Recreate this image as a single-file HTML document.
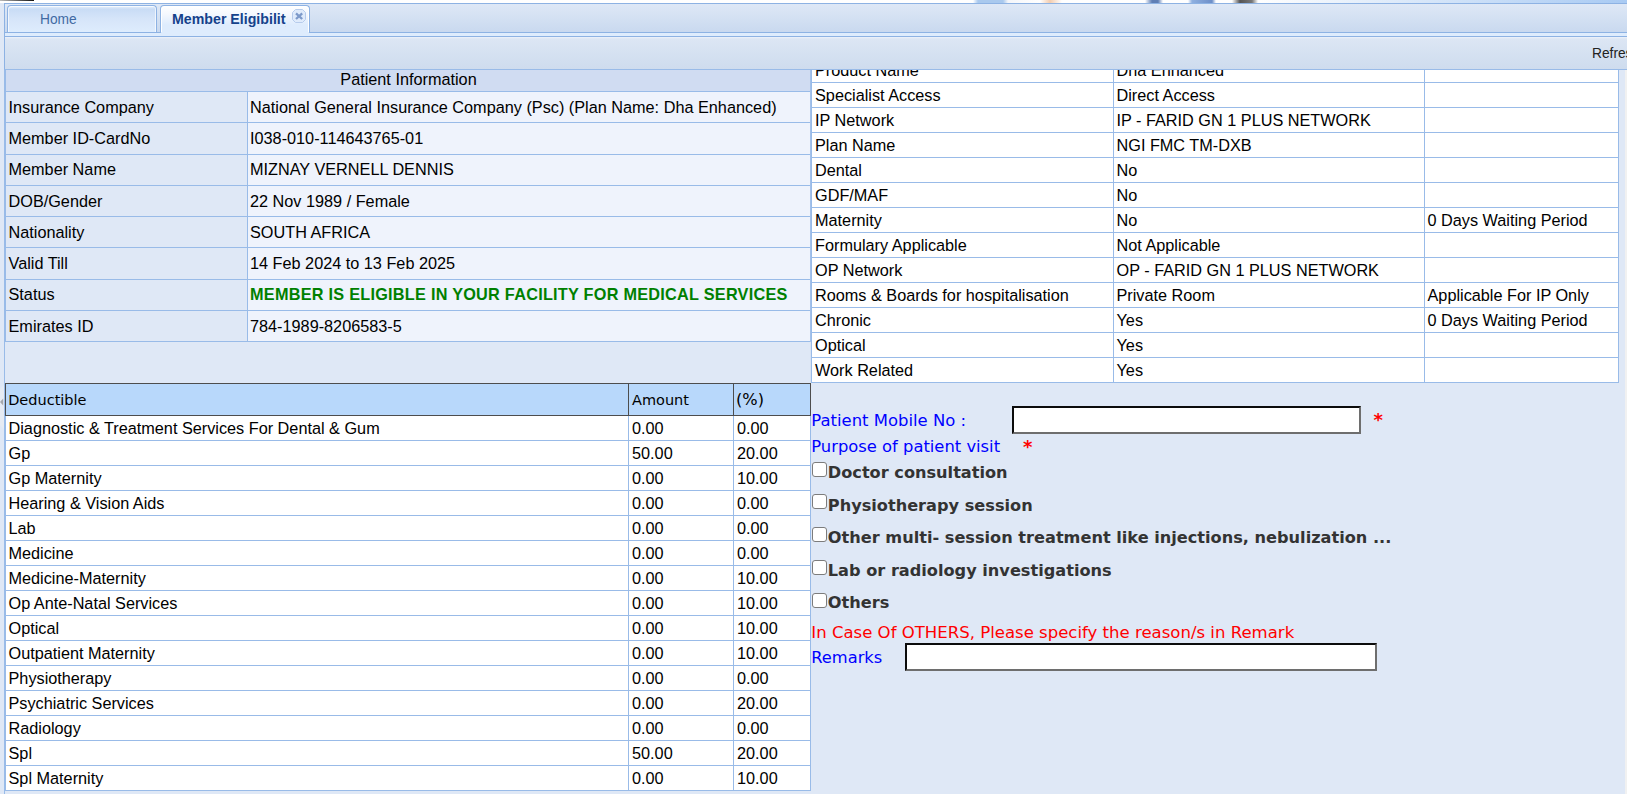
<!DOCTYPE html>
<html><head><meta charset="utf-8"><title>Member Eligibility</title>
<style>
html,body{margin:0;padding:0;}
body{width:1627px;height:794px;overflow:hidden;background:#dfe8f6;position:relative;font-family:"Liberation Sans",sans-serif;font-size:16.25px;color:#000;}
div,span{box-sizing:border-box;}
.a{position:absolute;}
.t{position:absolute;white-space:nowrap;line-height:24px;height:24px;}
.hl{position:absolute;height:1px;background:#99bbe8;}
.vl{position:absolute;width:1px;background:#99bbe8;}
.v{font-family:"DejaVu Sans","Liberation Sans",sans-serif;}
.f{position:absolute;white-space:nowrap;line-height:24px;height:24px;font-family:"DejaVu Sans","Liberation Sans",sans-serif;font-size:16.25px;}
.blue{color:#0000ff;}
.red{color:#ff0000;}
.cb{position:absolute;width:15px;height:15px;border:1.5px solid #7c7c7c;border-radius:3px;background:#fff;}
.lbl{position:absolute;white-space:nowrap;line-height:24px;height:24px;font-family:"DejaVu Sans","Liberation Sans",sans-serif;font-weight:bold;font-size:16.17px;color:#333;}
.inp{position:absolute;background:#fff;border:2px solid;border-color:#0c0c0c #6e6e6e #6e6e6e #0c0c0c;}
</style></head><body>

<div class="a" style="left:0;top:0;width:1627px;height:3px;background:linear-gradient(90deg,#fff 0,#fff 973px,#a9c9ee 978px,#a9c9ee 1003px,#f4f6fa 1008px,#fff 1040px,#f3cdb0 1050px,#fff 1062px,#fff 1145px,#5f7fb5 1152px,#5f7fb5 1158px,#fff 1163px,#fff 1188px,#8fb0e0 1192px,#6d8fc8 1212px,#fff 1216px,#fff 1232px,#555 1240px,#777 1252px,#fff 1258px,#f4f8fd 1300px,#a8caf3 1627px);"></div>
<div class="a" style="left:0;top:0;width:34px;height:1px;background:linear-gradient(90deg,#bbb 0,#555 60%,#111 100%);"></div>
<div class="a" style="left:4px;top:3px;width:1623px;height:30px;border-top:1px solid #8db2e3;border-left:1px solid #8db2e3;border-bottom:1px solid #8db2e3;background:linear-gradient(#dee8f6,#c9d9ef);"></div>
<div class="a" style="left:4px;top:33px;width:1623px;height:4px;border-left:1px solid #8db2e3;border-bottom:1px solid #8db2e3;background:#deecfd;"></div>
<div class="a" style="left:7px;top:5px;width:150px;height:27px;border:1px solid #8db2e3;border-bottom:none;border-radius:4px 4px 0 0;background:linear-gradient(#eaf2fc 0,#c9dcf5 12%,#d6e5f9 50%,#deecfd 100%);box-shadow:inset 1px 1px 0 rgba(255,255,255,.65),inset -1px 0 0 rgba(255,255,255,.65);"></div>
<div class="t" style="left:40px;top:9px;font-size:13.75px;color:#416aa3;line-height:22px;height:22px;">Home</div>
<div class="a" style="left:160px;top:5px;width:150px;height:28px;border:1px solid #8db2e3;border-bottom:none;border-radius:4px 4px 0 0;background:linear-gradient(#ffffff 0,#f4f8fe 30%,#deecfd 70%,#deecfd 100%);box-shadow:inset 1px 1px 0 #fff,inset -1px 0 0 #fff;"></div>
<div class="a" style="left:161px;top:32px;width:148px;height:4px;background:#deecfd;"></div>
<div class="t" style="left:172px;top:8px;width:113.8px;overflow:hidden;font-size:14.2px;font-weight:bold;color:#15428b;line-height:22px;height:22px;">Member Eligibility</div>
<svg class="a" style="left:292px;top:9px;" width="14" height="14" viewBox="0 0 14 14"><path d="M3.5 0.5 H10.5 L13.5 3.5 V10.5 L10.5 13.5 H3.5 L0.5 10.5 V3.5 Z" fill="#dfebfb" stroke="#b7ccec"/><path d="M4 4.3 L10.2 10 M10.2 4.3 L4 10" stroke="#7d9aca" stroke-width="2.3" stroke-linecap="butt"/></svg>
<div class="a" style="left:4px;top:37px;width:1623px;height:33px;border-left:1px solid #8db2e3;border-bottom:1px solid #99bbe8;background:linear-gradient(#edf2fa 0,#dce6f4 2px,#cedcee 100%);"></div>
<div class="t" style="left:1592px;top:43px;font-size:13.75px;color:#222;line-height:22px;height:22px;">Refresh</div>
<div class="vl" style="left:4px;top:70px;height:724px;"></div>
<div class="a" style="left:5px;top:70px;width:806px;height:21px;background:#d0dcf2;"></div>
<div class="t" style="left:6px;top:67px;width:805px;text-align:center;">Patient Information</div>
<div class="a" style="left:5px;top:92px;width:242px;height:249px;background:#dfe8f6;"></div>
<div class="a" style="left:248px;top:92px;width:563px;height:249px;background:#eff3fc;"></div>
<div class="hl" style="left:5px;top:91px;width:806px;"></div>
<div class="hl" style="left:5px;top:122px;width:806px;"></div>
<div class="hl" style="left:5px;top:154px;width:806px;"></div>
<div class="hl" style="left:5px;top:185px;width:806px;"></div>
<div class="hl" style="left:5px;top:216px;width:806px;"></div>
<div class="hl" style="left:5px;top:247px;width:806px;"></div>
<div class="hl" style="left:5px;top:279px;width:806px;"></div>
<div class="hl" style="left:5px;top:310px;width:806px;"></div>
<div class="hl" style="left:5px;top:341px;width:806px;"></div>
<div class="vl" style="left:5px;top:70px;height:272px;"></div>
<div class="vl" style="left:247px;top:92px;height:250px;"></div>
<div class="t" style="left:8.5px;top:95px;">Insurance Company</div>
<div class="t" style="left:250px;top:95px;">National General Insurance Company (Psc) (Plan Name: Dha Enhanced)</div>
<div class="t" style="left:8.5px;top:126px;">Member ID-CardNo</div>
<div class="t" style="left:250px;top:126px;">I038-010-114643765-01</div>
<div class="t" style="left:8.5px;top:157px;">Member Name</div>
<div class="t" style="left:250px;top:157px;">MIZNAY VERNELL DENNIS</div>
<div class="t" style="left:8.5px;top:189px;">DOB/Gender</div>
<div class="t" style="left:250px;top:189px;">22 Nov 1989 / Female</div>
<div class="t" style="left:8.5px;top:220px;">Nationality</div>
<div class="t" style="left:250px;top:220px;">SOUTH AFRICA</div>
<div class="t" style="left:8.5px;top:251px;">Valid Till</div>
<div class="t" style="left:250px;top:251px;">14 Feb 2024 to 13 Feb 2025</div>
<div class="t" style="left:8.5px;top:282px;">Status</div>
<div class="t" style="left:250px;top:282px;font-weight:bold;color:#008000;letter-spacing:0.255px;">MEMBER IS ELIGIBLE IN YOUR FACILITY FOR MEDICAL SERVICES</div>
<div class="t" style="left:8.5px;top:314px;">Emirates ID</div>
<div class="t" style="left:250px;top:314px;">784-1989-8206583-5</div>
<div class="a" style="left:5px;top:416px;width:806px;height:374px;background:#fff;"></div>
<div class="a" style="left:5px;top:383px;width:806px;height:33px;background:#b8d8fb;border:1px solid #4d4d4d;"></div>
<div class="vl" style="left:628px;top:383px;height:33px;background:#4d4d4d;"></div>
<div class="vl" style="left:733px;top:383px;height:33px;background:#4d4d4d;"></div>
<div class="t v" style="left:8.2px;top:388px;font-size:14.5px;">Deductible</div>
<div class="t v" style="left:632px;top:388px;font-size:14.5px;">Amount</div>
<div class="t v" style="left:736px;top:388px;font-size:14.5px;font-size:16.2px;">(%)</div>
<div class="hl" style="left:5px;top:440px;width:806px;"></div>
<div class="t" style="left:8.5px;top:415.5px;">Diagnostic &amp; Treatment Services For Dental &amp; Gum</div>
<div class="t" style="left:632px;top:415.5px;">0.00</div>
<div class="t" style="left:737px;top:415.5px;">0.00</div>
<div class="hl" style="left:5px;top:465px;width:806px;"></div>
<div class="t" style="left:8.5px;top:440.5px;">Gp</div>
<div class="t" style="left:632px;top:440.5px;">50.00</div>
<div class="t" style="left:737px;top:440.5px;">20.00</div>
<div class="hl" style="left:5px;top:490px;width:806px;"></div>
<div class="t" style="left:8.5px;top:465.5px;">Gp Maternity</div>
<div class="t" style="left:632px;top:465.5px;">0.00</div>
<div class="t" style="left:737px;top:465.5px;">10.00</div>
<div class="hl" style="left:5px;top:515px;width:806px;"></div>
<div class="t" style="left:8.5px;top:490.5px;">Hearing &amp; Vision Aids</div>
<div class="t" style="left:632px;top:490.5px;">0.00</div>
<div class="t" style="left:737px;top:490.5px;">0.00</div>
<div class="hl" style="left:5px;top:540px;width:806px;"></div>
<div class="t" style="left:8.5px;top:515.5px;">Lab</div>
<div class="t" style="left:632px;top:515.5px;">0.00</div>
<div class="t" style="left:737px;top:515.5px;">0.00</div>
<div class="hl" style="left:5px;top:565px;width:806px;"></div>
<div class="t" style="left:8.5px;top:540.5px;">Medicine</div>
<div class="t" style="left:632px;top:540.5px;">0.00</div>
<div class="t" style="left:737px;top:540.5px;">0.00</div>
<div class="hl" style="left:5px;top:590px;width:806px;"></div>
<div class="t" style="left:8.5px;top:565.5px;">Medicine-Maternity</div>
<div class="t" style="left:632px;top:565.5px;">0.00</div>
<div class="t" style="left:737px;top:565.5px;">10.00</div>
<div class="hl" style="left:5px;top:615px;width:806px;"></div>
<div class="t" style="left:8.5px;top:590.5px;">Op Ante-Natal Services</div>
<div class="t" style="left:632px;top:590.5px;">0.00</div>
<div class="t" style="left:737px;top:590.5px;">10.00</div>
<div class="hl" style="left:5px;top:640px;width:806px;"></div>
<div class="t" style="left:8.5px;top:615.5px;">Optical</div>
<div class="t" style="left:632px;top:615.5px;">0.00</div>
<div class="t" style="left:737px;top:615.5px;">10.00</div>
<div class="hl" style="left:5px;top:665px;width:806px;"></div>
<div class="t" style="left:8.5px;top:640.5px;">Outpatient Maternity</div>
<div class="t" style="left:632px;top:640.5px;">0.00</div>
<div class="t" style="left:737px;top:640.5px;">10.00</div>
<div class="hl" style="left:5px;top:690px;width:806px;"></div>
<div class="t" style="left:8.5px;top:665.5px;">Physiotherapy</div>
<div class="t" style="left:632px;top:665.5px;">0.00</div>
<div class="t" style="left:737px;top:665.5px;">0.00</div>
<div class="hl" style="left:5px;top:715px;width:806px;"></div>
<div class="t" style="left:8.5px;top:690.5px;">Psychiatric Services</div>
<div class="t" style="left:632px;top:690.5px;">0.00</div>
<div class="t" style="left:737px;top:690.5px;">20.00</div>
<div class="hl" style="left:5px;top:740px;width:806px;"></div>
<div class="t" style="left:8.5px;top:715.5px;">Radiology</div>
<div class="t" style="left:632px;top:715.5px;">0.00</div>
<div class="t" style="left:737px;top:715.5px;">0.00</div>
<div class="hl" style="left:5px;top:765px;width:806px;"></div>
<div class="t" style="left:8.5px;top:740.5px;">Spl</div>
<div class="t" style="left:632px;top:740.5px;">50.00</div>
<div class="t" style="left:737px;top:740.5px;">20.00</div>
<div class="hl" style="left:5px;top:790px;width:806px;"></div>
<div class="t" style="left:8.5px;top:765.5px;">Spl Maternity</div>
<div class="t" style="left:632px;top:765.5px;">0.00</div>
<div class="t" style="left:737px;top:765.5px;">10.00</div>
<div class="vl" style="left:5px;top:416px;height:375px;"></div>
<div class="vl" style="left:628px;top:416px;height:375px;"></div>
<div class="vl" style="left:733px;top:416px;height:375px;"></div>
<div class="vl" style="left:810px;top:416px;height:375px;"></div>
<div class="a" style="left:811px;top:70px;width:808px;height:313px;overflow:hidden;background:#fff;">
<div class="hl" style="left:0;top:12px;width:808px;"></div>
<div class="t" style="left:4px;top:-12.2px;">Product Name</div>
<div class="t" style="left:305.5px;top:-12.2px;">Dha Enhanced</div>
<div class="hl" style="left:0;top:37px;width:808px;"></div>
<div class="t" style="left:4px;top:12.8px;">Specialist Access</div>
<div class="t" style="left:305.5px;top:12.8px;">Direct Access</div>
<div class="hl" style="left:0;top:62px;width:808px;"></div>
<div class="t" style="left:4px;top:37.8px;">IP Network</div>
<div class="t" style="left:305.5px;top:37.8px;">IP - FARID GN 1 PLUS NETWORK</div>
<div class="hl" style="left:0;top:87px;width:808px;"></div>
<div class="t" style="left:4px;top:62.8px;">Plan Name</div>
<div class="t" style="left:305.5px;top:62.8px;">NGI FMC TM-DXB</div>
<div class="hl" style="left:0;top:112px;width:808px;"></div>
<div class="t" style="left:4px;top:87.8px;">Dental</div>
<div class="t" style="left:305.5px;top:87.8px;">No</div>
<div class="hl" style="left:0;top:137px;width:808px;"></div>
<div class="t" style="left:4px;top:112.8px;">GDF/MAF</div>
<div class="t" style="left:305.5px;top:112.8px;">No</div>
<div class="hl" style="left:0;top:162px;width:808px;"></div>
<div class="t" style="left:4px;top:137.8px;">Maternity</div>
<div class="t" style="left:305.5px;top:137.8px;">No</div>
<div class="t" style="left:616.5px;top:137.8px;">0 Days Waiting Period</div>
<div class="hl" style="left:0;top:187px;width:808px;"></div>
<div class="t" style="left:4px;top:162.8px;">Formulary Applicable</div>
<div class="t" style="left:305.5px;top:162.8px;">Not Applicable</div>
<div class="hl" style="left:0;top:212px;width:808px;"></div>
<div class="t" style="left:4px;top:187.8px;">OP Network</div>
<div class="t" style="left:305.5px;top:187.8px;">OP - FARID GN 1 PLUS NETWORK</div>
<div class="hl" style="left:0;top:237px;width:808px;"></div>
<div class="t" style="left:4px;top:212.8px;">Rooms &amp; Boards for hospitalisation</div>
<div class="t" style="left:305.5px;top:212.8px;">Private Room</div>
<div class="t" style="left:616.5px;top:212.8px;">Applicable For IP Only</div>
<div class="hl" style="left:0;top:262px;width:808px;"></div>
<div class="t" style="left:4px;top:237.8px;">Chronic</div>
<div class="t" style="left:305.5px;top:237.8px;">Yes</div>
<div class="t" style="left:616.5px;top:237.8px;">0 Days Waiting Period</div>
<div class="hl" style="left:0;top:287px;width:808px;"></div>
<div class="t" style="left:4px;top:262.8px;">Optical</div>
<div class="t" style="left:305.5px;top:262.8px;">Yes</div>
<div class="hl" style="left:0;top:312px;width:808px;"></div>
<div class="t" style="left:4px;top:287.8px;">Work Related</div>
<div class="t" style="left:305.5px;top:287.8px;">Yes</div>
<div class="vl" style="left:0px;top:0;height:313px;"></div>
<div class="vl" style="left:302px;top:0;height:313px;"></div>
<div class="vl" style="left:613px;top:0;height:313px;"></div>
<div class="vl" style="left:807px;top:0;height:313px;"></div>
</div>
<div class="vl" style="left:810px;top:70px;height:272px;background:#a3c1ea;"></div>
<div class="vl" style="left:810px;top:342px;height:41px;background:#d6e2f4;"></div>
<div class="f blue" style="left:811.3px;top:409px;font-size:16.45px;">Patient Mobile No :</div>
<div class="inp" style="left:1012px;top:406px;width:349px;height:28px;"></div>
<div class="f red" style="left:1373.5px;top:408px;font-weight:bold;font-size:18px;">*</div>
<div class="f blue" style="left:811.3px;top:435px;font-size:16.35px;">Purpose of patient visit</div>
<div class="f red" style="left:1023px;top:435px;font-weight:bold;font-size:18px;">*</div>
<div class="cb" style="left:811.7px;top:462px;"></div>
<div class="lbl" style="left:827.8px;top:460.9px;">Doctor consultation</div>
<div class="cb" style="left:811.7px;top:494px;"></div>
<div class="lbl" style="left:827.8px;top:493.5px;">Physiotherapy session</div>
<div class="cb" style="left:811.7px;top:527px;"></div>
<div class="lbl" style="left:827.8px;top:526.1px;">Other multi- session treatment like injections, nebulization ...</div>
<div class="cb" style="left:811.7px;top:560px;"></div>
<div class="lbl" style="left:827.8px;top:558.7px;">Lab or radiology investigations</div>
<div class="cb" style="left:811.7px;top:593px;"></div>
<div class="lbl" style="left:827.8px;top:591.3px;">Others</div>
<div class="f red" style="left:811.3px;top:621px;font-size:16.55px;">In Case Of OTHERS, Please specify the reason/s in Remark</div>
<div class="f blue" style="left:811.3px;top:646px;">Remarks</div>
<div class="inp" style="left:905px;top:643px;width:472px;height:28px;"></div>
<svg class="a" style="left:0;top:384px;" width="4" height="46" viewBox="0 0 4 46"><path d="M0 5 L4 1 L4 45 L0 41 Z" fill="#e6ebf3"/><path d="M3.2 14.5 L0 18 L3.2 21.5 Z" fill="#a5a8ad"/></svg>
<div class="a" style="left:1625px;top:70px;width:2px;height:724px;background:#f1f1f1;"></div>
</body></html>
